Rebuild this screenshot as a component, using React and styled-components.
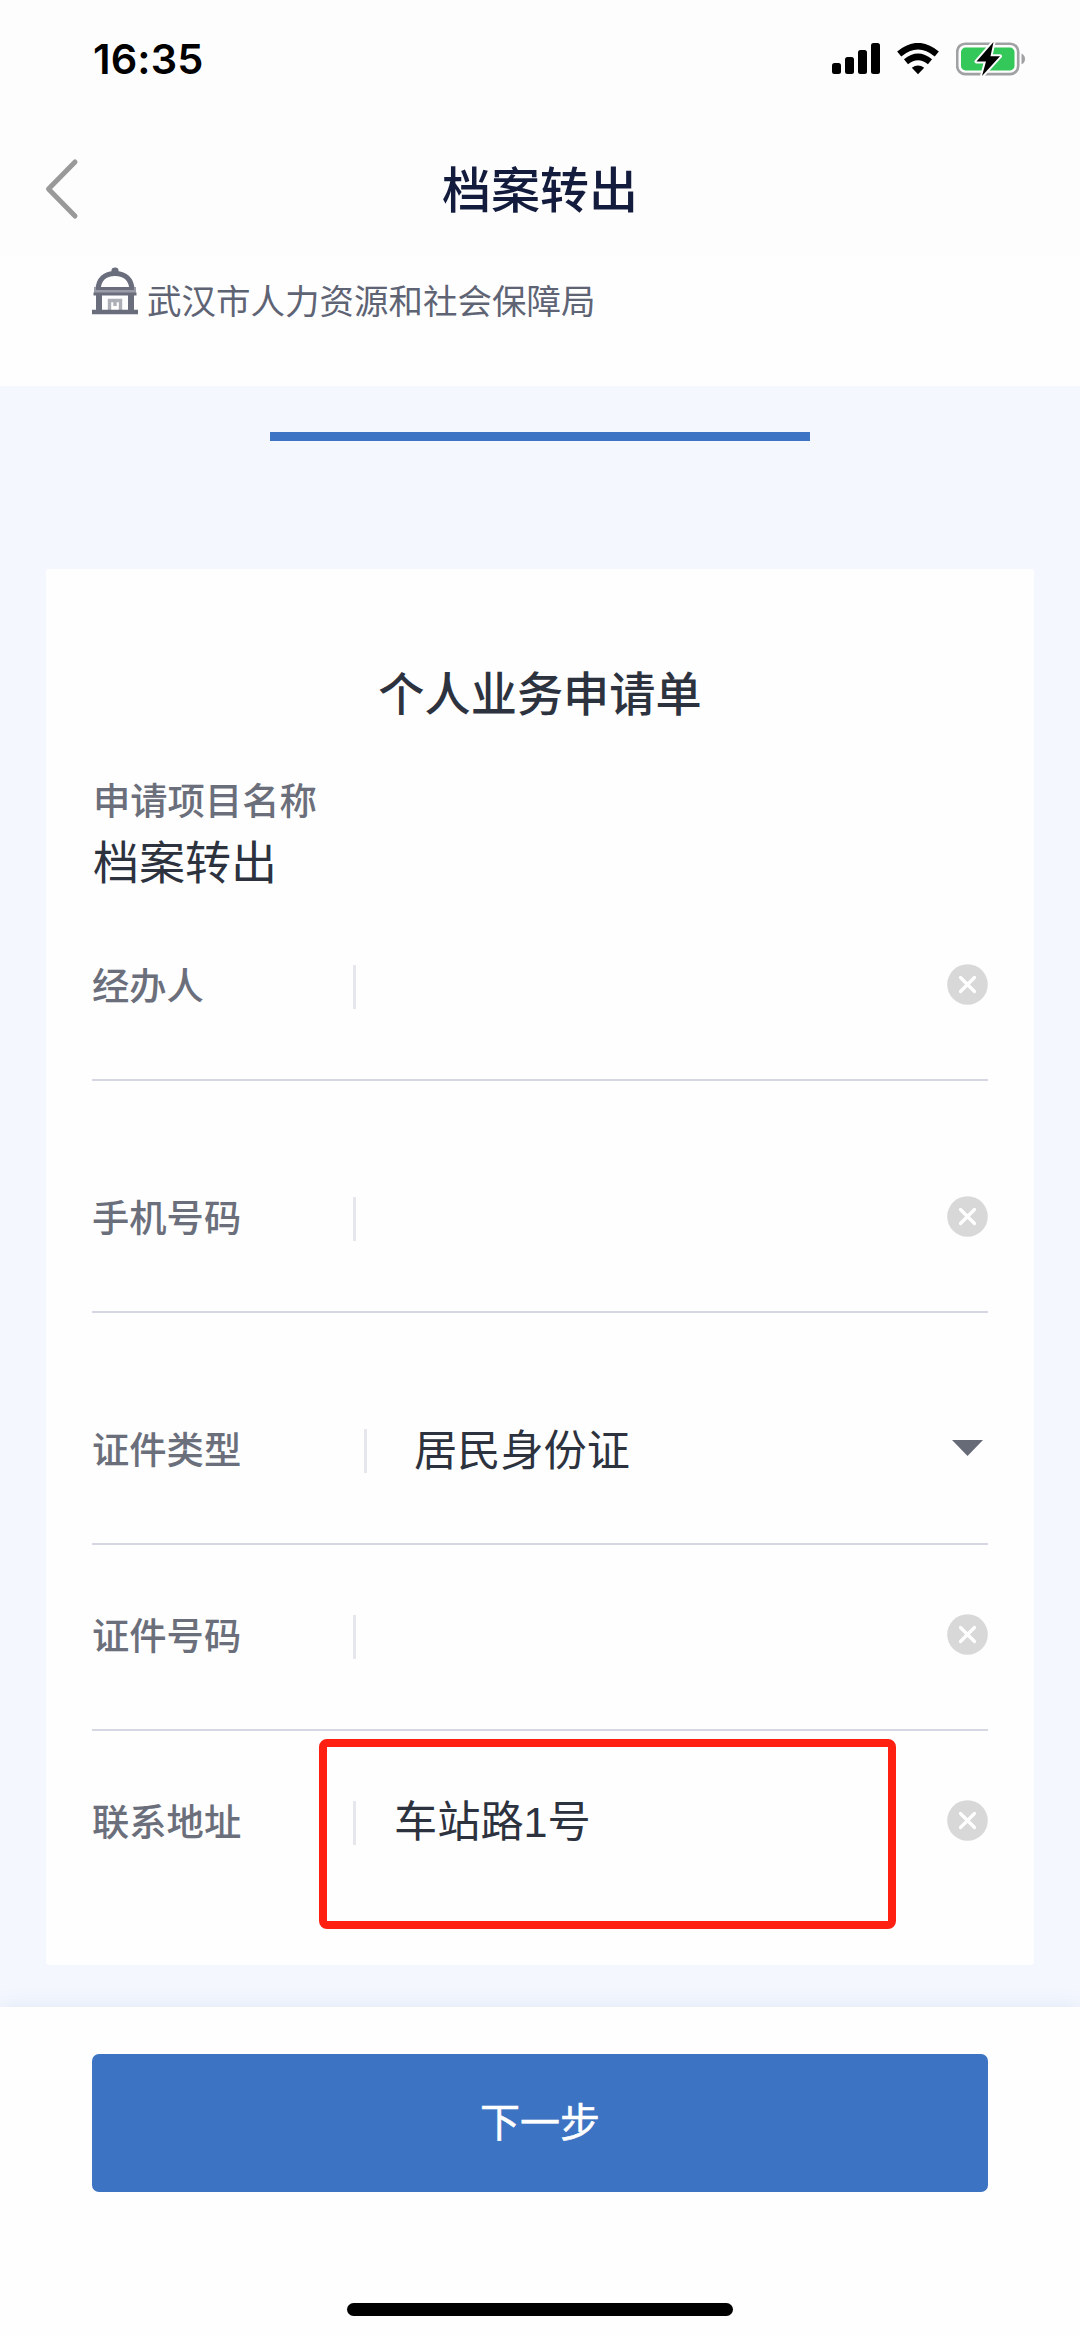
import React from "react";
import styled, { createGlobalStyle } from "styled-components";

const GlobalStyle = createGlobalStyle`
  * { box-sizing: border-box; }
  body { margin: 0; background: #fdfdfe; font-family: "Liberation Sans", "Noto Sans CJK SC", sans-serif; }
`;

const Screen = styled.div`
  display: flex;
  flex-direction: column;
  width: 1080px;
  height: 2337px;
  overflow: hidden;
  background: #f4f7fe;
`;

const StatusBar = styled.div`
  display: flex;
  justify-content: space-between;
  align-items: center;
  height: 118px;
  padding: 0 54px 0 93px;
  background: #fdfdfd;
`;

const Clock = styled.span`
  font: 600 41.5px/50px Inter, sans-serif;
  letter-spacing: 0.1px;
  color: #000;
`;

const StatusIcons = styled.div`
  display: flex;
  align-items: center;
  gap: 17px;
  svg { display: block; }
`;

const NavBar = styled.header`
  display: grid;
  grid-template-columns: 140px 1fr 140px;
  align-items: center;
  height: 138px;
  background: #fdfdfd;
`;

const BackButton = styled.button`
  display: flex;
  padding: 3px 0 0 44px;
  border: 0;
  background: none;
`;

const NavTitle = styled.h1`
  margin: 8px 0 0;
  text-align: center;
  font-size: 49px;
  font-weight: 500;
  line-height: 70px;
  color: #131c3c;
`;

const Department = styled.div`
  display: flex;
  height: 130px;
  padding: 11px 0 0 92px;
  gap: 9px;
  background: #fefefe;
  svg { display: block; flex: none; }
`;

const DepartmentName = styled.span`
  margin-top: 10px;
  font-size: 34.5px;
  line-height: 50px;
  color: #5f6475;
`;

const Main = styled.main`
  display: flex;
  flex-direction: column;
  height: 1621px;
  padding: 46px 46px 0;
`;

const Progress = styled.div`
  width: 540px;
  height: 9px;
  margin: 0 auto 128px;
  background: #3e74c4;
`;

const Card = styled.section`
  height: 1396px;
  padding: 91px 46px 0;
  border-radius: 3px;
  background: #fefefe;
`;

const CardTitle = styled.h2`
  margin: 0 0 44px;
  text-align: center;
  font-size: 46.2px;
  font-weight: 500;
  line-height: 70px;
  color: #2d323f;
`;

const ProjectLabel = styled.div`
  padding-left: 1px;
  font-size: 37.3px;
  font-weight: 500;
  line-height: 56px;
  color: #6b6f7b;
`;

const ProjectName = styled.div`
  padding-left: 1px;
  margin-bottom: -1px;
  font-size: 46px;
  line-height: 66px;
  color: #2d323f;
`;

const Field = styled.div`
  position: relative;
  display: flex;
  align-items: center;
  height: 186px;
  margin-bottom: ${(p) => (p.$spaced ? 46 : 0)}px;
  border-bottom: 2px solid ${(p) => (p.$last ? "transparent" : "#d5d7e2")};
`;

const FieldLabel = styled.label`
  width: ${(p) => (p.$wide ? 272 : 261)}px;
  font-size: 37.3px;
  font-weight: 500;
  line-height: 56px;
  color: #6b6f7b;
`;

const Divider = styled.span`
  width: 3px;
  height: 44px;
  background: #e6e7ed;
`;

const FieldValue = styled.span`
  flex: 1;
  padding-left: ${(p) => (p.$wide ? 47 : 38)}px;
  padding-bottom: ${(p) => (p.$wide ? 0 : 2)}px;
  font-size: 43.2px;
  line-height: 60px;
  color: #2d323f;
`;

const IconSlot = styled.span`
  display: flex;
  margin-bottom: ${(p) => p.$lift}px;
`;

const Highlight = styled.div`
  position: absolute;
  left: 227px;
  top: 8px;
  width: 577px;
  height: 190px;
  border: 8px solid #ff2011;
  border-radius: 8px;
`;

const Footer = styled.footer`
  display: flex;
  flex-direction: column;
  align-items: center;
  flex: 1;
  padding-top: 47px;
  background: #fefefe;
  box-shadow: 0 -4px 16px rgba(62, 116, 196, 0.08);
`;

const NextButton = styled.button`
  width: 896px;
  height: 138px;
  padding: 0;
  border: 0;
  border-radius: 7px;
  background: #3c73c3;
  color: #fff;
  font-family: inherit;
  font-size: 40px;
  font-weight: 400;
  line-height: 138px;
  -webkit-text-stroke: 0.5px #fff;
`;

const HomeIndicator = styled.div`
  width: 386px;
  height: 13px;
  margin-top: 111px;
  border-radius: 7px;
  background: #000;
`;

const Signal = () => (
  <svg width="48" height="32" viewBox="0 0 48 32">
    <rect x="0" y="20" width="9" height="11" rx="2.5" />
    <rect x="13" y="14" width="9" height="17" rx="2.5" />
    <rect x="26" y="7" width="9" height="24" rx="2.5" />
    <rect x="39" y="0" width="9" height="31" rx="2.5" />
  </svg>
);

const Wifi = () => (
  <svg width="42" height="32" viewBox="0 0 42 32">
    <g fill="none" stroke="#000" strokeWidth="6.4">
      <path d="M2.2 11Q21-4.7 39.8 11" />
      <path d="M9 18.8Q21 9 33 18.8" />
    </g>
    <path d="M14.8 24.8Q21 20 27.2 24.8L21 31.2Z" />
  </svg>
);

const Battery = () => (
  <svg width="70" height="34" viewBox="0 0 70 34">
    <rect x="1.2" y="1.7" width="61" height="30.4" rx="8" fill="none" stroke="#a0a1a3" strokeWidth="2.6" />
    <rect x="5" y="5.6" width="53.5" height="22.8" rx="4.5" fill="#34c759" />
    <path d="M65.5 11.5Q69 13 69 17T65.5 22.3Z" fill="#a0a1a3" />
    <path d="M37.5 0L20.5 19.5H30L26 34L44 14.2H34.5Z" fill="#000" stroke="#fdfdfd" strokeWidth="4" strokeLinejoin="round" paintOrder="stroke" />
  </svg>
);

const Building = () => (
  <svg width="46" height="48" viewBox="0 0 46 48" fill="none" stroke="#6a6e7c">
    <path d="M19.5 6V3Q19.5 0.5 23 0.5T26.5 3V6Z" fill="#6a6e7c" stroke="none" />
    <path d="M6 23C6.5 12 13 6.5 23 6.5S39.5 12 40 23" strokeWidth="5.2" />
    <rect x="2" y="20" width="42" height="8" fill="#9a9da8" stroke="none" />
    <path d="M4 21.5H42M1.5 27H44.5" strokeWidth="2.8" />
    <path d="M7 27V45M39 27V45" strokeWidth="6" />
    <path d="M0 45H46" strokeWidth="4.5" />
    <path d="M17.5 43V33.5H28.5V43M23 34V39" strokeWidth="3.4" strokeOpacity=".55" />
  </svg>
);

const Clear = () => (
  <svg width="41" height="41" viewBox="0 0 41 41">
    <circle cx="20.5" cy="20.5" r="20.3" fill="#d8d8d8" />
    <path d="M13.5 13.5L27.5 27.5M27.5 13.5L13.5 27.5" stroke="#fff" strokeWidth="3.2" strokeLinecap="round" />
  </svg>
);

const Arrow = () => (
  <svg width="41" height="16" viewBox="0 0 41 16">
    <path d="M5 0H36L20.5 16Z" fill="#676b78" />
  </svg>
);

const fields = [
  { label: "经办人", spaced: true },
  { label: "手机号码", spaced: true },
  { label: "证件类型", value: "居民身份证", select: true },
  { label: "证件号码" },
  { label: "联系地址", value: "车站路1号", highlight: true },
];

export default function App() {
  return (
    <Screen>
      <GlobalStyle />
      <StatusBar>
        <Clock>16:35</Clock>
        <StatusIcons>
          <Signal />
          <Wifi />
          <Battery />
        </StatusIcons>
      </StatusBar>
      <NavBar>
        <BackButton aria-label="返回">
          <svg width="36" height="62" viewBox="0 0 36 62">
            <path d="M31 4L4.5 31L31 58" fill="none" stroke="#999" strokeWidth="5" strokeLinecap="round" strokeLinejoin="round" />
          </svg>
        </BackButton>
        <NavTitle>档案转出</NavTitle>
      </NavBar>
      <Department>
        <Building />
        <DepartmentName>武汉市人力资源和社会保障局</DepartmentName>
      </Department>
      <Main>
        <Progress />
        <Card>
          <CardTitle>个人业务申请单</CardTitle>
          <ProjectLabel>申请项目名称</ProjectLabel>
          <ProjectName>档案转出</ProjectName>
          {fields.map((f) => (
            <Field key={f.label} $spaced={f.spaced} $last={f.highlight}>
              <FieldLabel $wide={f.select}>{f.label}</FieldLabel>
              <Divider />
              <FieldValue $wide={f.select}>{f.value}</FieldValue>
              <IconSlot $lift={f.select ? 7 : 5}>{f.select ? <Arrow /> : <Clear />}</IconSlot>
              {f.highlight && <Highlight />}
            </Field>
          ))}
        </Card>
      </Main>
      <Footer>
        <NextButton>下一步</NextButton>
        <HomeIndicator />
      </Footer>
    </Screen>
  );
}
